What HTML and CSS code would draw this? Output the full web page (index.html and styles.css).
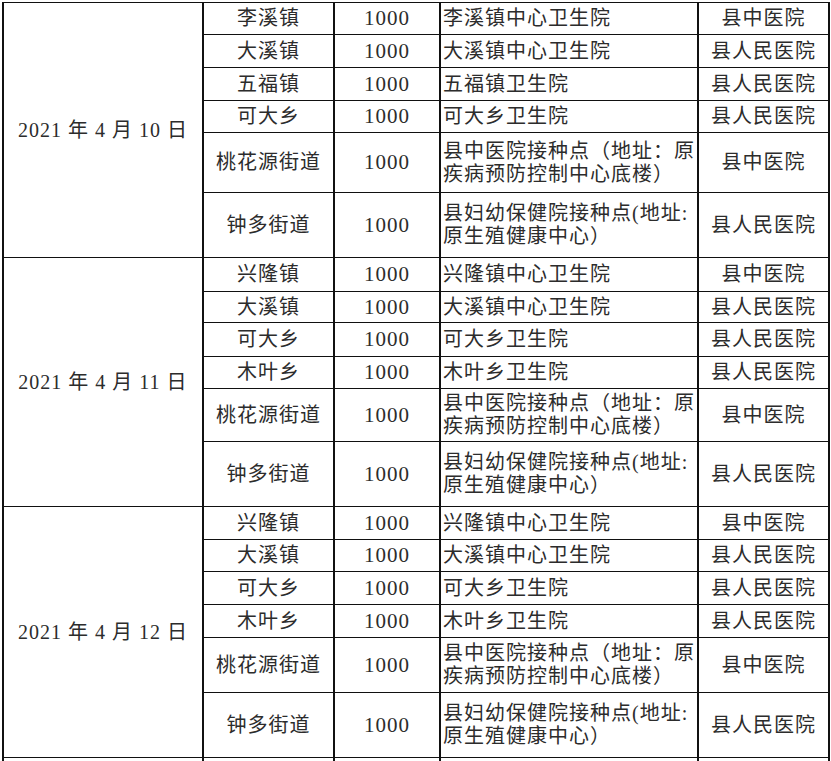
FILE: index.html
```html
<!DOCTYPE html>
<html lang="zh-CN">
<head>
<meta charset="utf-8">
<title>接种安排</title>
<link rel="stylesheet" href="styles.css">
</head>
<body>
<table class="sched">
  <colgroup>
    <col class="c1"><col class="c2"><col class="c3"><col class="c4"><col class="c5">
  </colgroup>
  <tbody>
    <tr class="h32">
      <td class="date" rowspan="6">2021 年 4 月 10 日</td>
      <td class="town">李溪镇</td><td class="num">1000</td><td class="site">李溪镇中心卫生院</td><td class="hosp">县中医院</td>
    </tr>
    <tr class="h33"><td class="town">大溪镇</td><td class="num">1000</td><td class="site">大溪镇中心卫生院</td><td class="hosp">县人民医院</td></tr>
    <tr class="h33"><td class="town">五福镇</td><td class="num">1000</td><td class="site">五福镇卫生院</td><td class="hosp">县人民医院</td></tr>
    <tr class="h32"><td class="town">可大乡</td><td class="num">1000</td><td class="site">可大乡卫生院</td><td class="hosp">县人民医院</td></tr>
    <tr class="h60"><td class="town">桃花源街道</td><td class="num">1000</td><td class="site">县中医院接种点（地址：原<br>疾病预防控制中心底楼）</td><td class="hosp">县中医院</td></tr>
    <tr class="h65"><td class="town">钟多街道</td><td class="num">1000</td><td class="site">县妇幼保健院接种点(地址:<br>原生殖健康中心）</td><td class="hosp">县人民医院</td></tr>

    <tr class="h34">
      <td class="date" rowspan="6">2021 年 4 月 11 日</td>
      <td class="town">兴隆镇</td><td class="num">1000</td><td class="site">兴隆镇中心卫生院</td><td class="hosp">县中医院</td>
    </tr>
    <tr class="h31"><td class="town">大溪镇</td><td class="num">1000</td><td class="site">大溪镇中心卫生院</td><td class="hosp">县人民医院</td></tr>
    <tr class="h34"><td class="town">可大乡</td><td class="num">1000</td><td class="site">可大乡卫生院</td><td class="hosp">县人民医院</td></tr>
    <tr class="h32"><td class="town">木叶乡</td><td class="num">1000</td><td class="site">木叶乡卫生院</td><td class="hosp">县人民医院</td></tr>
    <tr class="h53"><td class="town">桃花源街道</td><td class="num">1000</td><td class="site">县中医院接种点（地址：原<br>疾病预防控制中心底楼）</td><td class="hosp">县中医院</td></tr>
    <tr class="h65"><td class="town">钟多街道</td><td class="num">1000</td><td class="site">县妇幼保健院接种点(地址:<br>原生殖健康中心）</td><td class="hosp">县人民医院</td></tr>

    <tr class="h33">
      <td class="date" rowspan="6">2021 年 4 月 12 日</td>
      <td class="town">兴隆镇</td><td class="num">1000</td><td class="site">兴隆镇中心卫生院</td><td class="hosp">县中医院</td>
    </tr>
    <tr class="h32"><td class="town">大溪镇</td><td class="num">1000</td><td class="site">大溪镇中心卫生院</td><td class="hosp">县人民医院</td></tr>
    <tr class="h33"><td class="town">可大乡</td><td class="num">1000</td><td class="site">可大乡卫生院</td><td class="hosp">县人民医院</td></tr>
    <tr class="h33"><td class="town">木叶乡</td><td class="num">1000</td><td class="site">木叶乡卫生院</td><td class="hosp">县人民医院</td></tr>
    <tr class="h55"><td class="town">桃花源街道</td><td class="num">1000</td><td class="site">县中医院接种点（地址：原<br>疾病预防控制中心底楼）</td><td class="hosp">县中医院</td></tr>
    <tr class="h65"><td class="town">钟多街道</td><td class="num">1000</td><td class="site">县妇幼保健院接种点(地址:<br>原生殖健康中心）</td><td class="hosp">县人民医院</td></tr>

    <tr class="h33"><td></td><td></td><td></td><td></td><td></td></tr>
  </tbody>
</table>
</body>
</html>
```

FILE: styles.css
```css
html, body {
  margin: 0;
  padding: 0;
  background: #ffffff;
}

body {
  overflow: hidden;
}

.sched {
  margin: 2px 0 0 2px;
  border-collapse: collapse;
  table-layout: fixed;
  width: 826px;
  font-family: "Liberation Serif", "Noto Sans CJK SC", serif;
  font-size: 20px;
  color: #2c2c2c;
}

.c1 { width: 200px; }
.c2 { width: 131px; }
.c3 { width: 106px; }
.c4 { width: 258px; }
.c5 { width: 131px; }

.sched td {
  border-top: 1px solid #111111;
  border-bottom: 1px solid #111111;
  border-left: 2px solid #111111;
  border-right: 2px solid #111111;
  padding: 0;
  vertical-align: middle;
  line-height: 23px;
  letter-spacing: 1px;
  white-space: nowrap;
  overflow: hidden;
}

.date {
  text-align: center;
  letter-spacing: 0;
  padding-bottom: 2px;
}

.town {
  text-align: center;
  padding-left: 1px;
}

.num {
  text-align: center;
  font-size: 21px;
  letter-spacing: 0;
  padding-left: 2px;
}

.sched .site {
  text-align: left;
  padding-left: 2px;
}

.hosp {
  text-align: center;
  padding-left: 1px;
}

.h31 { height: 31px; }
.h32 { height: 32px; }
.h33 { height: 33px; }
.h34 { height: 34px; }
.h53 { height: 53px; }
.h55 { height: 55px; }
.h60 { height: 60px; }
.h65 { height: 65px; }
```
